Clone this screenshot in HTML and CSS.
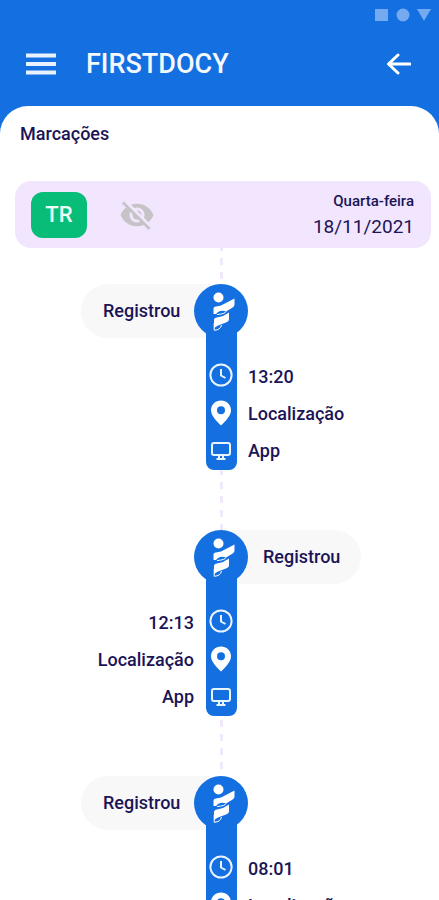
FILE: index.html
```html
<!DOCTYPE html>
<html lang="pt-BR">
<head>
<meta charset="utf-8">
<meta name="viewport" content="width=device-width, initial-scale=1">
<title>Firstdocy</title>
<link rel="stylesheet" href="styles.css">
</head>
<body>
<svg class="sprite" aria-hidden="true">
  <symbol id="logo" viewBox="-6 0 28 39">
    <circle cx="5.500" cy="5.500" r="5"/>
    <path d="M0.500 17Q0.500 14.500 3 14.500L8 13.500L21.500 6.500V13Q21 15 18 16.500L13 19.500Q9 17.800 5 20L3 22H0.500Z"/>
    <path d="M1 28Q1 26 4 25.500L10 24L16 20.500V27.500Q16 29.500 13 30.500L5 33.500L1 36Z"/>
    <path class="thin" d="M13 19.500Q12 22 4 22.500M1.200 31V38.300Q7.500 38 8.500 33"/>
  </symbol>
  <symbol id="clock" viewBox="0 0 24 24">
    <circle cx="12" cy="12" r="10.600"/><path d="M12 6V12.500L16.500 15"/>
  </symbol>
  <symbol id="pin" viewBox="0 0 20 26">
    <path fill-rule="evenodd" d="M10 0.500C4.500 0.500 0 4.700 0 10.200C0 16 6 21.500 10 25.500C14 21.500 20 16 20 10.200C20 4.700 15.500 .5 10 .5ZM10 6.200a4 4 0 1 1 0 8a4 4 0 1 1 0-8Z"/>
  </symbol>
  <symbol id="monitor" viewBox="0 0 20 18">
    <rect x="1" y="1" width="18" height="12" rx="2"/><path d="M8 13V16.500M12 13V16.500M5.500 17H14.500"/>
  </symbol>
</svg>

<header class="top">
  <div class="status" aria-hidden="true">
    <svg width="56" height="14" viewBox="0 0 56 14"><path d="M0 1H13V13H0Z"/><circle cx="28" cy="7" r="6.500"/><path d="M42 1H56L49 13Z"/></svg>
  </div>
  <nav class="bar">
    <button class="icon-btn" type="button" aria-label="Menu">
      <svg width="30" height="22" viewBox="0 0 30 22"><path d="M0 2.500H30M0 11H30M0 19.500H30"/></svg>
    </button>
    <h1>FIRSTDOCY</h1>
    <button class="icon-btn" type="button" aria-label="Voltar">
      <svg class="arrow" width="26" height="22" viewBox="0 0 26 22"><path d="M13 2L3.500 11L13 20M4 11H25"/></svg>
    </button>
  </nav>
</header>

<main class="sheet">
  <h2>Marcações</h2>
  <section class="day">
    <span class="code">TR</span>
    <button class="icon-btn" type="button" aria-label="Ocultar">
      <svg class="eye" width="36" height="36" viewBox="0 0 24 24">
        <path d="M12 7c2.760 0 5 2.240 5 5 0 .65-.13 1.260-.36 1.830l2.920 2.920c1.510-1.260 2.700-2.890 3.430-4.750-1.730-4.390-6-7.500-11-7.500-1.400 0-2.740.25-3.980.7l2.160 2.160C10.740 7.130 11.350 7 12 7zM2 4.270l2.280 2.280.46.46C3.080 8.300 1.780 10.020 1 12c1.730 4.390 6 7.500 11 7.500 1.550 0 3.030-.3 4.380-.84l.42.42L19.730 22 21 20.730 3.270 3 2 4.270zM7.530 9.800l1.550 1.550c-.05.21-.08.43-.08.65 0 1.660 1.340 3 3 3 .22 0 .44-.03.65-.08l1.550 1.550c-.67.33-1.410.53-2.200.53-2.760 0-5-2.240-5-5 0-.79.2-1.530.53-2.200zm4.310-.78l3.150 3.150.02-.16c0-1.660-1.340-3-3-3l-.17.01z"/>
      </svg>
    </button>
    <div class="date"><span>Quarta-feira</span><time datetime="2021-11-18">18/11/2021</time></div>
  </section>

  <ul class="timeline">
    <li class="entry">
      <strong class="tag">Registrou</strong>
      <div class="spine">
        <span class="badge"><svg class="logo"><use href="#logo"/></svg></span>
        <div class="rail">
          <svg class="line clock"><use href="#clock"/></svg>
          <svg class="pin"><use href="#pin"/></svg>
          <svg class="line monitor"><use href="#monitor"/></svg>
        </div>
      </div>
      <div class="details"><time>13:20</time><span>Localização</span><span>App</span></div>
    </li>
    <li class="entry flip">
      <strong class="tag">Registrou</strong>
      <div class="spine">
        <span class="badge"><svg class="logo"><use href="#logo"/></svg></span>
        <div class="rail">
          <svg class="line clock"><use href="#clock"/></svg>
          <svg class="pin"><use href="#pin"/></svg>
          <svg class="line monitor"><use href="#monitor"/></svg>
        </div>
      </div>
      <div class="details"><time>12:13</time><span>Localização</span><span>App</span></div>
    </li>
    <li class="entry">
      <strong class="tag">Registrou</strong>
      <div class="spine">
        <span class="badge"><svg class="logo"><use href="#logo"/></svg></span>
        <div class="rail">
          <svg class="line clock"><use href="#clock"/></svg>
          <svg class="pin"><use href="#pin"/></svg>
          <svg class="line monitor"><use href="#monitor"/></svg>
        </div>
      </div>
      <div class="details"><time>08:01</time><span>Localização</span><span>App</span></div>
    </li>
  </ul>
</main>
</body>
</html>
```
FILE: styles.css
```css
:root {
  --blue: #146fe0;
  --ink: #1b1456;
  --lilac: #f1e6fe;
}

* { box-sizing: border-box; }

body {
  margin: 0;
  height: 100vh;
  display: flex;
  flex-direction: column;
  background: var(--blue);
  color: var(--ink);
  font: 500 18px/24px Roboto, sans-serif;
}

h1, h2, ul { margin: 0; padding: 0; font-weight: 500; }

.sprite { display: none; }
svg { display: block; }

.icon-btn {
  border: 0;
  padding: 0;
  background: none;
  cursor: pointer;
}

.top { flex: none; padding: 8px 8px 24px; }

.status { display: flex; justify-content: flex-end; }
.status svg { fill: #75aaf0; }

.bar {
  display: flex;
  align-items: center;
  height: 60px;
  padding: 24px 20px 0 18px;
}
.bar svg { fill: none; stroke: #eaf2ff; stroke-width: 4; }
.bar .arrow { stroke: #fff; stroke-width: 3; stroke-linecap: round; stroke-linejoin: round; }

h1 {
  flex: 1;
  margin-left: 30px;
  color: #f4f8ff;
  font-size: 27px;
  line-height: 32px;
}

.sheet {
  flex: 1;
  min-height: 0;
  overflow-y: auto;
  scrollbar-width: none;
  background: #fff;
  border-radius: 28px 28px 0 0;
}

h2 { padding: 16px 20px 0; font-size: 18px; line-height: 24px; }

.day {
  display: flex;
  align-items: center;
  height: 67px;
  margin: 35px 8px 0 15px;
  padding: 0 17px 0 16px;
  border-radius: 16px;
  background: var(--lilac);
}

.code {
  width: 56px;
  margin-right: 32px;
  border-radius: 12px;
  background: #07bd78;
  color: #effff8;
  font-size: 22px;
  line-height: 46px;
  text-align: center;
}

.eye { fill: #c6c3c6; }

.date {
  margin-left: auto;
  display: flex;
  flex-direction: column;
  align-items: flex-end;
  font-size: 15px;
  line-height: 24px;
}
.date time { font-size: 19px; font-weight: 400; line-height: 28px; }

.timeline {
  padding-left: 3px;
  list-style: none;
  background: repeating-linear-gradient(#efe9fb 0 3px, transparent 3px 10px, #efe9fb 10px 14px) top center / 3px 100% no-repeat content-box;
}

.entry {
  display: grid;
  grid-template-columns: 1fr 54px 1fr;
  padding: 36px 0 24px;
}

.tag {
  grid-area: 1 / 1;
  justify-self: end;
  margin-right: -16px;
  padding-left: 22px;
  width: 129px;
  height: 54px;
  border-radius: 27px 0 0 27px;
  background: #f8f8f8;
  font-weight: 500;
  line-height: 54px;
}

.spine {
  grid-area: 1 / 2;
  z-index: 1;
  display: flex;
  flex-direction: column;
  align-items: center;
}

.badge {
  width: 54px;
  height: 54px;
  display: grid;
  place-items: center;
  border-radius: 50%;
  background: var(--blue);
}

.rail {
  width: 31px;
  margin-top: -6px;
  padding-top: 24px;
  display: grid;
  grid-auto-rows: 38px;
  place-items: center;
  border-radius: 0 0 8px 8px;
  background: var(--blue);
}

.logo { width: 28px; height: 39px; fill: #fff; }
.thin { fill: none; stroke: #fff; stroke-width: 1; }
.line { fill: none; stroke: #eaf4ff; stroke-width: 2; }
.clock { width: 24px; height: 24px; }
.pin { width: 20px; height: 26px; fill: #fff; }
.monitor { width: 20px; height: 18px; }

.details {
  grid-area: 1 / 3;
  display: grid;
  grid-auto-rows: 37px;
  align-items: center;
  align-content: start;
  padding-top: 74px;
}

.flip .tag {
  grid-area: 1 / 3;
  justify-self: start;
  margin: 0 0 0 -16px;
  padding-left: 31px;
  border-radius: 0 27px 27px 0;
}
.flip .details { grid-area: 1 / 1; justify-items: end; }
```
